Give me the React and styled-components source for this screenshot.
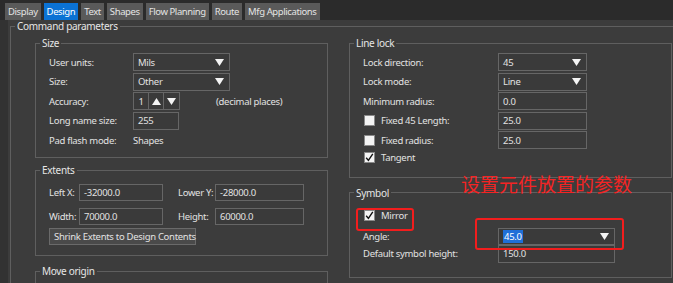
import React from "react";
import styled, { createGlobalStyle } from "styled-components";

const GlobalStyle = createGlobalStyle`
  html, body {
    margin: 0;
    padding: 0;
    background: #2b2b2b;
  }
  body {
    font-family: "Noto Sans", "Open Sans", sans-serif;
    font-size: 9.5px;
    letter-spacing: -0.3px;
    color: #e2e2e2;
  }
`;

const Window = styled.div`
  width: 673px;
  height: 283px;
  overflow: hidden;
  display: flex;
  flex-direction: column;
  background: #2b2b2b;
`;

const TabBar = styled.div`
  display: flex;
  gap: 3px;
  height: 21px;
  padding: 3px 0 0 5px;
  box-sizing: border-box;
`;

const Tab = styled.div`
  height: 17px;
  padding: 0 3px;
  display: flex;
  align-items: center;
  letter-spacing: -0.4px;
  background: ${({ $active }) => ($active ? "#0b72d4" : "#5a5a5a")};
  color: ${({ $active }) => ($active ? "#ffffff" : "#e4e4e4")};
`;

const Panel = styled.div`
  flex: 1;
  background: #3c3c3c;
  border-left: 8px solid #323232;
  padding: 1px 0 0 2px;
`;

const Group = styled.fieldset`
  position: relative;
  margin: ${({ $mt }) => $mt || 0}px 0 0 0;
  padding: 0;
  border: 1px solid #5f5f5f;
  width: ${({ $w }) => $w}px;
  box-sizing: border-box;
  min-width: 0;
`;

const Legend = styled.legend`
  padding: 0 2px;
  margin-left: 4px;
  line-height: ${({ $lh }) => $lh || 12}px;
  font-size: 10px;
  color: #e6e6e6;
`;

const Columns = styled.div`
  display: flex;
  gap: 21px;
  padding: 6px 0 0 24px;
`;

const Column = styled.div`
  display: flex;
  flex-direction: column;
  width: ${({ $w }) => $w}px;
`;

const FormGrid = styled.div`
  display: grid;
  grid-template-columns: ${({ $label }) => $label}px auto;
  grid-template-rows: ${({ $rows }) => $rows || "none"};
  grid-auto-rows: 18px;
  row-gap: ${({ $gap }) => ($gap === undefined ? 1.5 : $gap)}px;
  align-items: center;
  padding: ${({ $pad }) => $pad};
`;

const Label = styled.span`
  white-space: nowrap;
`;

const Field = styled.div`
  height: ${({ $h }) => $h || 18}px;
  width: ${({ $w }) => $w}px;
  box-sizing: border-box;
  border: 1px solid #666666;
  background: #3a3a3a;
  display: flex;
  align-items: center;
  padding-left: 4px;
`;

const Select = styled(Field)`
  justify-content: space-between;
  padding-right: 5px;
`;

const Selected = styled.span`
  background: ${({ $hl }) => ($hl ? "#1f6fd8" : "transparent")};
  color: ${({ $hl }) => ($hl ? "#ffffff" : "inherit")};
  padding: 0 1px;
  line-height: 13px;
`;

const Arrow = ({ up }) => (
  <svg width="9" height="7" viewBox="0 0 9 7">
    <path d={up ? "M0 7 L4.5 0 L9 7 Z" : "M0 0 L9 0 L4.5 7 Z"} fill="#f4f4f4" />
  </svg>
);

const SpinRow = styled.div`
  display: flex;
  align-items: center;
`;

const Spin = styled.div`
  display: flex;
  height: 18px;
  box-sizing: border-box;
  border: 1px solid #666666;
  background: #3a3a3a;
`;

const SpinCell = styled.div`
  width: ${({ $w }) => $w}px;
  display: flex;
  align-items: center;
  justify-content: center;
  border-left: ${({ $first }) => ($first ? "none" : "1px solid #666666")};
`;

const Hint = styled.span`
  margin-left: 36px;
`;

const CheckRow = styled.div`
  grid-column: ${({ $span }) => ($span ? "1 / -1" : "auto")};
  align-self: ${({ $top }) => ($top ? "start" : "center")};
  height: 14px;
  display: flex;
  align-items: center;
  gap: 6px;
  padding-left: 1px;
`;

const Box = styled.span`
  width: 11px;
  height: 11px;
  box-sizing: border-box;
  background: #f4f4f4;
  border: 1px solid #8a8a8a;
  display: flex;
  align-items: center;
  justify-content: center;
`;

const Check = ({ checked, label, span, top }) => (
  <CheckRow $span={span} $top={top}>
    <Box>
      {checked && (
        <svg width="9" height="9" viewBox="0 0 9 9">
          <path d="M1.2 4.8 L3.4 7.4 L7.8 0.8" stroke="#111" strokeWidth="1.4" fill="none" />
        </svg>
      )}
    </Box>
    <Label>{label}</Label>
  </CheckRow>
);

const ExtentGrid = styled.div`
  display: grid;
  grid-template-columns: 30px 84px 52px 89px;
  grid-template-rows: 24px 20px 17px;
  align-items: start;
  padding: 8px 0 10px 13px;
  & > span {
    line-height: 17px;
  }
  & > :nth-child(4n + 3) {
    padding-left: 15px;
  }
`;

const Button = styled.div`
  grid-column: 1 / 4;
  width: 147px;
  height: 17px;
  box-sizing: border-box;
  border: 1px solid #6a6a6a;
  background: #4a4a4a;
  display: flex;
  align-items: center;
  padding-left: 4px;
  white-space: nowrap;
`;

const Highlight = styled.div`
  position: absolute;
  left: ${({ $x }) => $x}px;
  top: ${({ $y }) => $y}px;
  width: ${({ $w }) => $w}px;
  height: ${({ $h }) => $h}px;
  box-sizing: border-box;
  border: 2.5px solid #f21d1d;
  border-radius: 3px;
  pointer-events: none;
`;

const Note = styled.div`
  position: absolute;
  left: 111px;
  top: -26px;
  font-family: "Noto Sans CJK SC", sans-serif;
  font-size: 19px;
  line-height: 22px;
  letter-spacing: 0;
  color: #f42424;
  white-space: nowrap;
`;

const tabs = ["Display", "Design", "Text", "Shapes", "Flow Planning", "Route", "Mfg Applications"];

export default function App() {
  return (
    <Window>
      <GlobalStyle />
      <TabBar>
        {tabs.map((t) => (
          <Tab key={t} $active={t === "Design"}>
            {t}
          </Tab>
        ))}
      </TabBar>
      <Panel>
        <Group $w={700}>
          <Legend $lh={10}>Command parameters</Legend>
          <Columns>
            <Column $w={293}>
              <Group $w={293}>
                <Legend>Size</Legend>
                <FormGrid $label={84} $pad="4px 0 8px 13px">
                  <Label>User units:</Label>
                  <Select $w={97}>
                    <span>Mils</span>
                    <Arrow />
                  </Select>
                  <Label>Size:</Label>
                  <Select $w={97}>
                    <span>Other</span>
                    <Arrow />
                  </Select>
                  <Label>Accuracy:</Label>
                  <SpinRow>
                    <Spin>
                      <SpinCell $w={14} $first>
                        1
                      </SpinCell>
                      <SpinCell $w={14}>
                        <Arrow up />
                      </SpinCell>
                      <SpinCell $w={15}>
                        <Arrow />
                      </SpinCell>
                    </Spin>
                    <Hint>(decimal places)</Hint>
                  </SpinRow>
                  <Label>Long name size:</Label>
                  <Field $w={46}>255</Field>
                  <Label>Pad flash mode:</Label>
                  <span>Shapes</span>
                </FormGrid>
              </Group>
              <Group $w={293} $mt={6}>
                <Legend>Extents</Legend>
                <ExtentGrid>
                  <Label>Left X:</Label>
                  <Field $w={84} $h={17}>-32000.0</Field>
                  <Label>Lower Y:</Label>
                  <Field $w={89} $h={17}>-28000.0</Field>
                  <Label>Width:</Label>
                  <Field $w={84} $h={17}>70000.0</Field>
                  <Label>Height:</Label>
                  <Field $w={89} $h={17}>60000.0</Field>
                  <Button>Shrink Extents to Design Contents</Button>
                </ExtentGrid>
              </Group>
              <Group $w={293} $mt={9}>
                <Legend>Move origin</Legend>
                <FormGrid $label={30} $pad="8px 0 10px 13px">
                  <Label />
                  <Field $w={84} $h={17} />
                </FormGrid>
              </Group>
            </Column>
            <Column $w={323}>
              <Group $w={323}>
                <Legend>Line lock</Legend>
                <FormGrid $label={135} $rows="repeat(5, 18px) 13px" $pad="4px 0 13px 13px">
                  <Label>Lock direction:</Label>
                  <Select $w={89}>
                    <span>45</span>
                    <Arrow />
                  </Select>
                  <Label>Lock mode:</Label>
                  <Select $w={89}>
                    <span>Line</span>
                    <Arrow />
                  </Select>
                  <Label>Minimum radius:</Label>
                  <Field $w={89}>0.0</Field>
                  <Check label="Fixed 45 Length:" />
                  <Field $w={89}>25.0</Field>
                  <Check label="Fixed radius:" />
                  <Field $w={89}>25.0</Field>
                  <Check checked span label="Tangent" />
                </FormGrid>
              </Group>
              <Group $w={323} $mt={9}>
                <Legend>Symbol</Legend>
                <Note>设置元件放置的参数</Note>
                <FormGrid $label={135} $rows="19px 17px 18px" $gap={0} $pad="10px 0 14px 13px">
                  <Check checked span top label="Mirror" />
                  <Label>Angle:</Label>
                  <Select $w={117} $h={17}>
                    <Selected $hl>45.0</Selected>
                    <Arrow />
                  </Select>
                  <Label>Default symbol height:</Label>
                  <Field $w={117}>150.0</Field>
                </FormGrid>
                <Highlight $x={6} $y={9} $w={58} $h={23} />
                <Highlight $x={125} $y={19} $w={149} $h={32} />
              </Group>
            </Column>
          </Columns>
        </Group>
      </Panel>
    </Window>
  );
}
